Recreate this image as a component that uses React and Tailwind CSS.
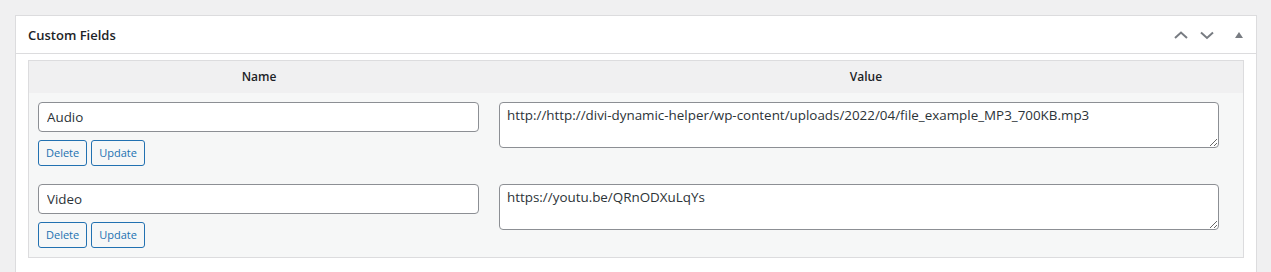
import React from 'react';

const fields = [
    { name: 'Audio', value: 'http://http://divi-dynamic-helper/wp-content/uploads/2022/04/file_example_MP3_700KB.mp3' },
    { name: 'Video', value: 'https://youtu.be/QRnODXuLqYs' },
];

const Chevron = ({ up }) => (
    <svg width="16" height="16" viewBox="0 0 16 16" fill="none" stroke="#787c82" strokeWidth="2">
        {up ? <path d="M2 11l6-5.5 6 5.5" /> : <path d="M2 5.5l6 5.5 6-5.5" />}
    </svg>
);

const FieldButton = ({ children }) => (
    <button
        type="button"
        className="h-[26px] px-[7px] rounded-[3px] border border-[#2271b1] bg-[#f6f7f7] text-[11px] text-[#2271b1] leading-none">
        {children}
    </button>
);

const App = () => (
    <div className="w-[1271px] h-[272px] overflow-hidden bg-[#f0f0f1] pt-[15px] pl-[15px] text-[#2c3338]" style={{ fontFamily: '"Open Sans", "Noto Sans", sans-serif' }}>
        <div className="w-[1242px] h-[280px] bg-white border border-[#dcdcde]">
            <div className="h-[38px] flex items-center justify-between pl-[12px] pr-[12px] border-b border-[#dcdcde]">
                <h2 className="text-[13px] font-semibold text-[#1d2327] pt-[3px]">Custom Fields</h2>
                <div className="flex items-center">
                    <span className="w-[26px] flex justify-center"><Chevron up /></span>
                    <span className="w-[26px] flex justify-center"><Chevron /></span>
                    <span className="w-[24px] flex justify-end">
                        <svg width="10" height="8" viewBox="0 0 10 8"><path d="M5 1l4 6H1z" fill="#787c82" /></svg>
                    </span>
                </div>
            </div>

            <div className="px-[12px] pt-[6px]">
                <table className="w-[1216px] border border-[#dcdcde] border-collapse">
                    <thead>
                        <tr className="bg-[#f0f0f1] h-[32px]">
                            <th className="w-[461px] text-[12px] font-semibold text-[#1d2327]">Name</th>
                            <th className="text-[12px] font-semibold text-[#1d2327]">Value</th>
                        </tr>
                    </thead>
                    <tbody className="bg-[#f6f7f7]">
                        {fields.map((field) => (
                            <tr key={field.name}>
                                <td className="align-top pl-[9px] pr-[10px] pt-[9px] pb-[9px]">
                                    <input
                                        type="text"
                                        value={field.name}
                                        readOnly
                                        className="w-[441px] h-[30px] px-[8px] rounded-[4px] border border-[#8c8f94] bg-white text-[13.4px] text-[#2c3338] outline-none" />
                                    <div className="flex gap-[4px] mt-[8px]">
                                        <FieldButton>Delete</FieldButton>
                                        <FieldButton>Update</FieldButton>
                                    </div>
                                </td>
                                <td className="align-top pl-[10px] pr-[24px] pt-[9px]">
                                    <textarea
                                        value={field.value}
                                        readOnly
                                        className="block w-[720px] h-[46px] px-[7px] py-[3px] rounded-[4px] border border-[#8c8f94] bg-white text-[13.4px] leading-[1.45] text-[#2c3338] outline-none resize-y" />
                                </td>
                            </tr>
                        ))}
                    </tbody>
                </table>
            </div>
        </div>
    </div>
);

export default App;
